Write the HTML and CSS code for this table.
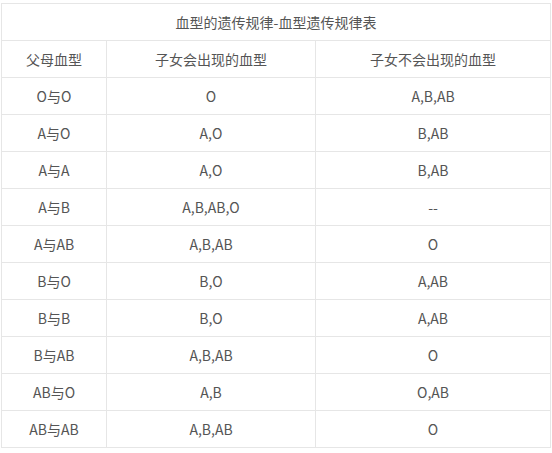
FILE: index.html
```html
<!DOCTYPE html>
<html lang="zh">
<head>
<meta charset="utf-8">
<link rel="stylesheet" href="styles.css">
</head>
<body>
<table class="blood">
<colgroup><col class="c1"><col class="c2"><col class="c3"></colgroup>
<tr><td colspan="3" class="title">血型的遗传规律-血型遗传规律表</td></tr>
<tr><td>父母血型</td><td>子女会出现的血型</td><td>子女不会出现的血型</td></tr>
<tr><td>O与O</td><td>O</td><td>A,B,AB</td></tr>
<tr><td>A与O</td><td>A,O</td><td>B,AB</td></tr>
<tr><td>A与A</td><td>A,O</td><td>B,AB</td></tr>
<tr><td>A与B</td><td>A,B,AB,O</td><td>--</td></tr>
<tr><td>A与AB</td><td>A,B,AB</td><td>O</td></tr>
<tr><td>B与O</td><td>B,O</td><td>A,AB</td></tr>
<tr><td>B与B</td><td>B,O</td><td>A,AB</td></tr>
<tr><td>B与AB</td><td>A,B,AB</td><td>O</td></tr>
<tr><td>AB与O</td><td>A,B</td><td>O,AB</td></tr>
<tr><td>AB与AB</td><td>A,B,AB</td><td>O</td></tr>
</table>
</body>
</html>
```
FILE: styles.css
```css
html, body {
  margin: 0;
  background: #fff;
}
body {
  padding: 3px 0 0 1px;
  font-family: "Noto Sans CJK SC", "Noto Sans", sans-serif;
  font-size: 14px;
  color: #555;
}
.blood {
  border-collapse: collapse;
  width: 549px;
  table-layout: fixed;
}
.c1 { width: 105px; }
.c2 { width: 209px; }
.c3 { width: 235px; }
.blood td {
  border: 1px solid #e6e6e6;
  height: 36px;
  padding: 0;
  text-align: center;
  vertical-align: middle;
  line-height: 20px;
}
```
